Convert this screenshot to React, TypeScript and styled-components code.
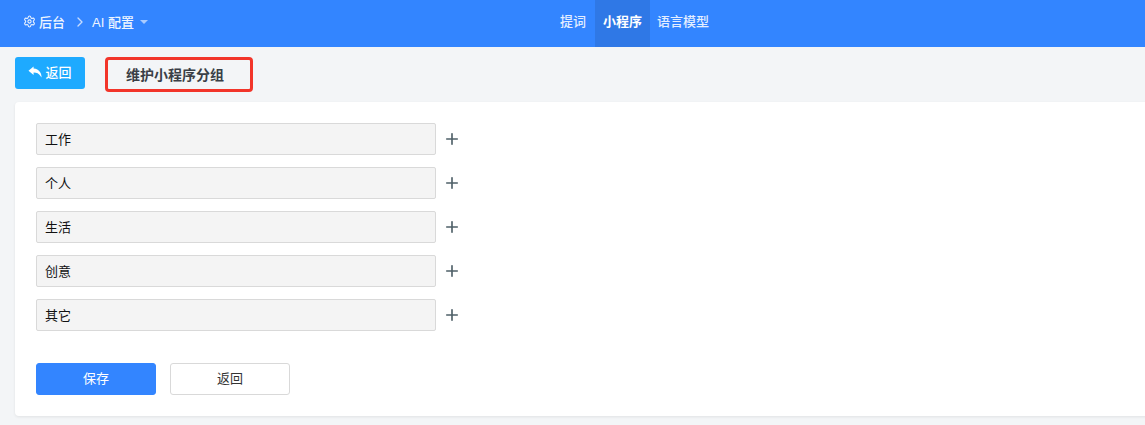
import styled, { createGlobalStyle } from "styled-components"
import { ChevronRight, Plus, Settings } from "lucide-react"

const GlobalStyle = createGlobalStyle`
  html, body {
    margin: 0;
    padding: 0;
    overflow: hidden;
    background: #f3f5f7;
    font-family: "Liberation Sans", "Noto Sans CJK SC", sans-serif;
  }
`

const Page = styled.div`
  width: 1145px;
  height: 425px;
  overflow: hidden;
`

const Header = styled.header`
  height: 47px;
  background: #3385ff;
  display: grid;
  grid-template-columns: 553px auto;
  color: #fff;
  font-size: 13px;
`

const Breadcrumb = styled.nav`
  display: flex;
  align-items: center;
  padding-left: 23px;
  color: #eef5ff;
  font-weight: 500;
`

const Crumb = styled.span`
  display: flex;
  align-items: center;
  gap: 3px;
  margin-bottom: 4px;
`

const Separator = styled.span`
  display: flex;
  margin: 0 4px 4px 7px;
  color: #c6dcff;
`

const Caret = styled.span`
  width: 0;
  height: 0;
  margin-left: 3px;
  margin-right: 1px;
  border-left: 4px solid transparent;
  border-right: 4px solid transparent;
  border-top: 4px solid #a9cbff;
`

const Tabs = styled.div`
  display: flex;
`

const Tab = styled.div<{ $active?: boolean }>`
  height: 47px;
  padding: 0 ${(p) => (p.$active ? "8px" : "7px")};
  margin-left: ${(p) => (p.$active ? "2px" : "0")};
  box-sizing: border-box;
  line-height: 43px;
  color: ${(p) => (p.$active ? "#fff" : "#e4eeff")};
  font-weight: ${(p) => (p.$active ? 700 : 500)};
  background: ${(p) => (p.$active ? "#2f78e6" : "transparent")};
`

const Toolbar = styled.div`
  display: flex;
  align-items: center;
  gap: 20px;
  height: 55px;
  padding-left: 15px;
`

const BackLink = styled.button`
  width: 70px;
  height: 32px;
  margin-top: -3px;
  display: flex;
  align-items: center;
  justify-content: center;
  gap: 3px;
  padding: 0 0 3px;
  border: none;
  border-radius: 3px;
  background: #1eaaff;
  color: #fff;
  font: inherit;
  font-size: 13px;
  font-weight: 500;
`

const Highlight = styled.div`
  width: 148px;
  height: 35px;
  margin-top: -1px;
  box-sizing: border-box;
  display: flex;
  align-items: center;
  padding-left: 18px;
  border: 3px solid #f2352a;
  border-radius: 4px;
  font-size: 14px;
  font-weight: 700;
  color: #3a3f46;
`

const Card = styled.section`
  margin-left: 15px;
  width: 1160px;
  height: 314px;
  box-sizing: border-box;
  padding: 21px;
  background: #fff;
  border-radius: 4px;
  box-shadow: 0 1px 3px rgba(0, 0, 0, 0.08);
`

const Groups = styled.div`
  display: flex;
  flex-direction: column;
  gap: 12px;
`

const Row = styled.div`
  display: flex;
  align-items: center;
  gap: 7px;
`

const GroupInput = styled.div`
  width: 400px;
  height: 32px;
  box-sizing: border-box;
  padding-left: 8px;
  line-height: 32px;
  background: #f4f4f4;
  border: 1px solid #d9d9d9;
  border-radius: 2px;
  font-size: 13px;
  color: #111;
`

const AddIcon = styled(Plus)`
  color: #4f6068;
`

const Actions = styled.div`
  display: flex;
  gap: 14px;
  margin-top: 32px;
`

const Button = styled.button<{ $primary?: boolean }>`
  width: 120px;
  height: 32px;
  padding: 0 0 4px;
  border: 1px solid ${(p) => (p.$primary ? "#3385ff" : "#d9d9d9")};
  border-radius: 3px;
  background: ${(p) => (p.$primary ? "#3385ff" : "#fff")};
  color: ${(p) => (p.$primary ? "#fff" : "#333")};
  font: inherit;
  font-size: 13px;
`

const BackArrow = () => (
  <svg width="14" height="12" viewBox="0 0 14 12" fill="#fff">
    <path d="M5.6 0.5 0.5 4.8l5.1 4.3V6.5c3.2 0 5.3 0.9 6.9 3.6 0 0 0.6 1 1 1.4 0.3-3.8-2.2-8.6-7.9-8.9z" />
  </svg>
)

const groups = ["工作", "个人", "生活", "创意", "其它"]

export default function App() {
  return (
    <Page>
      <GlobalStyle />
      <Header>
        <Breadcrumb>
          <Crumb>
            <Settings size={13} strokeWidth={1.9} />
            后台
          </Crumb>
          <Separator>
            <ChevronRight size={16} strokeWidth={2} />
          </Separator>
          <Crumb>
            AI 配置
            <Caret />
          </Crumb>
        </Breadcrumb>
        <Tabs>
          <Tab>提词</Tab>
          <Tab $active>小程序</Tab>
          <Tab>语言模型</Tab>
        </Tabs>
      </Header>
      <Toolbar>
        <BackLink>
          <BackArrow />
          返回
        </BackLink>
        <Highlight>维护小程序分组</Highlight>
      </Toolbar>
      <Card>
        <Groups>
          {groups.map((name) => (
            <Row key={name}>
              <GroupInput>{name}</GroupInput>
              <AddIcon size={18} strokeWidth={2.2} />
            </Row>
          ))}
        </Groups>
        <Actions>
          <Button $primary>保存</Button>
          <Button>返回</Button>
        </Actions>
      </Card>
    </Page>
  )
}
